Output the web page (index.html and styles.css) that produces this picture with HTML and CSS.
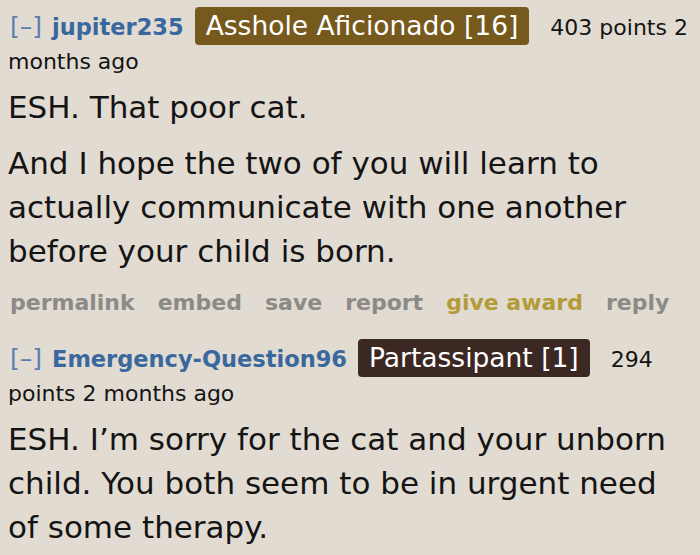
FILE: index.html
```html
<!DOCTYPE html>
<html>
<head>
<meta charset="utf-8">
<link rel="stylesheet" href="styles.css">
</head>
<body>
<div class="comment">
  <p class="tagline"><span class="expand">[–]</span> <span class="author">jupiter235</span> <span class="flair flair-olive">Asshole Aficionado [16]</span> <span class="score">403 points 2 months ago</span></p>
  <div class="md">
    <p>ESH. That poor cat.</p>
    <p>And I hope the two of you will learn to actually communicate with one another before your child is born.</p>
  </div>
  <ul class="buttons">
    <li>permalink</li>
    <li>embed</li>
    <li>save</li>
    <li>report</li>
    <li class="award">give award</li>
    <li>reply</li>
  </ul>
</div>
<div class="comment">
  <p class="tagline"><span class="expand">[–]</span> <span class="author">Emergency-Question96</span> <span class="flair flair-dark">Partassipant [1]</span> <span class="score">294 points 2 months ago</span></p>
  <div class="md">
    <p>ESH. I’m sorry for the cat and your unborn child. You both seem to be in urgent need of some therapy.</p>
  </div>
</div>
</body>
</html>
```

FILE: styles.css
```css
html, body {
  margin: 0;
  background: #e2dbd2;
}
body {
  padding: 0 8px;
  font-family: "DejaVu Sans", Verdana, sans-serif;
  color: #141414;
}
.tagline {
  margin: 0;
  padding-top: 9px;
  font-size: 22px;
  line-height: 34px;
}
.expand {
  color: #5a7fae;
  font-size: 25px;
  line-height: 1;
  margin-left: 2px;
  margin-right: 3px;
}
.author {
  color: #39689e;
  font-weight: bold;
  font-size: 22.5px;
  margin-right: 4px;
}
.flair {
  font-size: 26.5px;
  color: #fff;
  padding: 3px 11px 4px;
  border-radius: 4px;
  margin-right: 14px;
}
.flair-olive { background: #76591d; }
.flair-dark { background: #3c2822; }
.score { color: #141414; }
.md {
  font-size: 31px;
  line-height: 44px;
}
.md p {
  margin: 12px 0 0;
}
.md p:first-child {
  margin-top: 6px;
}
.buttons {
  list-style: none;
  margin: 13px 0 0;
  padding: 0 0 0 2px;
  display: flex;
  gap: 23px;
  font-size: 22px;
  font-weight: bold;
  color: #8b8a87;
  line-height: 34px;
}
.buttons .award { color: #b39c38; }
.comment + .comment .tagline { padding-top: 21px; }
```
